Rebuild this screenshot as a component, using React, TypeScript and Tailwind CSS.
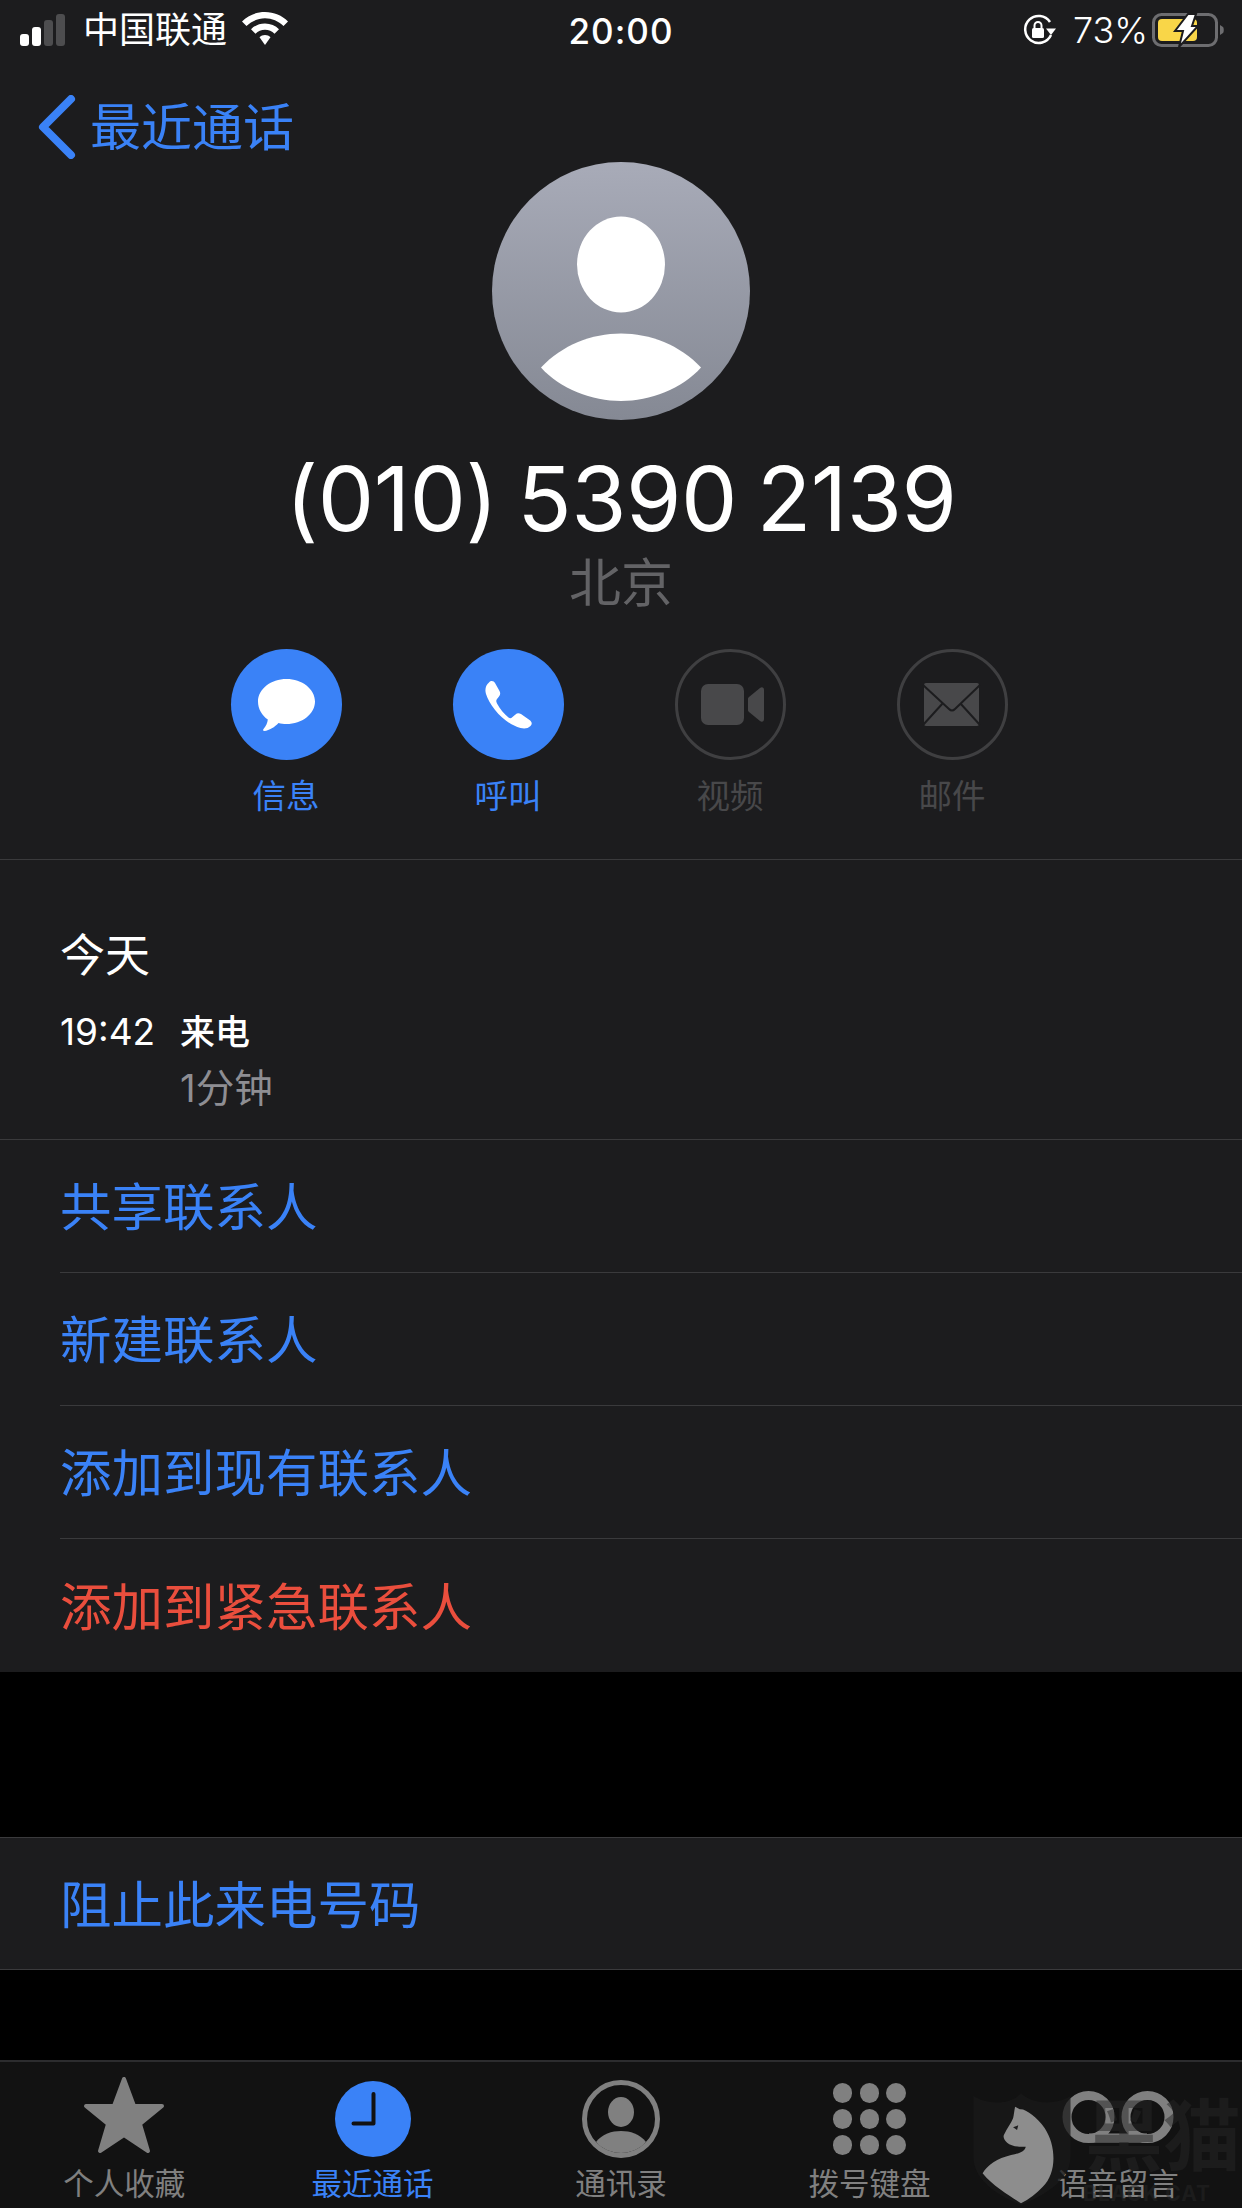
import type { ReactNode } from "react";

const actions = [
  { label: "信息", on: true, icon: <MessageIcon /> },
  { label: "呼叫", on: true, icon: <PhoneIcon /> },
  { label: "视频", on: false, icon: <VideoIcon /> },
  { label: "邮件", on: false, icon: <MailIcon /> },
];

function MessageIcon() {
  return (
    <svg viewBox="0 0 111 111" className="w-full h-full">
      <path fill="#fff" d="M55.500 30C71 30 84 40 84 52.500C84 65 71 75 55.500 75C52.500 75 50 74.700 47.500 74C44 78 38 81.500 33.500 82C32 82 31.700 81 32.500 80C35 77 36.500 74 36.800 70.500C31 66.500 27 60 27 52.500C27 40 40 30 55.500 30Z" />
    </svg>
  );
}

function PhoneIcon() {
  return (
    <svg viewBox="0 0 111 111" className="w-full h-full">
      <path fill="#fff" d="M36 33.500C38 31 41 32 42 34L46.500 42C47.500 44 47.500 45.500 46 47.500L44 50C43 51.500 43 52.500 44 54.500C47 60 51 65 55.500 68.500C57 69.500 58 69.500 59.500 68L62.500 65.500C64 64 66 64 68 65L76.500 71C79 73 79.500 75 77.500 77C75 79.500 71.500 80 67.500 79C52 75 37 58 33 45C31.500 40 33 36 36 33.500Z" />
    </svg>
  );
}

function VideoIcon() {
  return (
    <svg viewBox="0 0 105 105" className="w-full h-full">
      <rect x="23" y="32" width="43" height="41" rx="7" fill="#48484a" />
      <path fill="#48484a" d="M70 47C70 46 70.500 45.500 71 45L82 36C84 34.500 86 35.500 86 38V67C86 69.500 84 70.500 82 69L71 60C70.500 59.500 70 59 70 58Z" />
    </svg>
  );
}

function MailIcon() {
  return (
    <svg viewBox="0 0 105 105" className="w-full h-full">
      <rect x="24" y="31" width="55" height="43" rx="2" fill="#48484a" />
      <path fill="none" stroke="#1c1c1e" strokeWidth="2" d="M23 33L49 57C51 59 53 59 55 57L80 33M23 73L43 51M80 73L60 51" />
    </svg>
  );
}

function StatusBar() {
  return (
    <div className="h-[60px] flex items-center justify-between relative text-white pl-[20px] pr-[16px]">
      <div className="flex items-center">
        <div className="flex items-end gap-[3px] h-[32px] mt-[-1px]">
          <span className="w-[9px] h-[12px] rounded-[3px] bg-white" />
          <span className="w-[9px] h-[19px] rounded-[3px] bg-white" />
          <span className="w-[9px] h-[26px] rounded-[3px] bg-[#4d4d4f]" />
          <span className="w-[9px] h-[32px] rounded-[3px] bg-[#4d4d4f]" />
        </div>
        <span className="ml-[18px] text-[36px] leading-none">中国联通</span>
        <svg viewBox="0 0 46 33" className="w-[46px] h-[33px] ml-[15px] mt-[-3px]">
          <path fill="#fff" d="M23 0C32 0 40 3.500 46 9.500L41.500 14C36.500 9.200 30 6.300 23 6.300C16 6.300 9.500 9.200 4.500 14L0 9.500C6 3.500 14 0 23 0Z" />
          <path fill="#fff" d="M23 11.500C28.500 11.500 33.500 13.700 37 17.200L32.500 21.700C30 19.300 26.700 17.800 23 17.800C19.300 17.800 16 19.300 13.500 21.700L9 17.200C12.500 13.700 17.500 11.500 23 11.500Z" />
          <path fill="#fff" d="M23 23C25.200 23 27 23.800 28.500 25.200L23 33L17.500 25.200C19 23.800 20.800 23 23 23Z" />
        </svg>
      </div>
      <span className="absolute left-0 right-0 mt-[2px] text-center text-[35px] font-medium leading-none tracking-[1px]">20:00</span>
      <div className="flex items-center">
        <svg viewBox="0 0 34 32" className="w-[34px] h-[32px]">
          <path fill="none" stroke="#fff" strokeWidth="2.500" d="M29 21A13.500 13.500 0 1 1 28 8" />
          <path fill="#fff" d="M24 14.500H34L29 21Z" />
          <rect x="10" y="14" width="12" height="10" rx="1.500" fill="#fff" />
          <path fill="none" stroke="#fff" strokeWidth="2" d="M12.500 14V11.500A3.500 3.500 0 0 1 19.500 11.500V14" />
        </svg>
        <span className="ml-[17px] mr-[-1px] text-[36px] leading-none font-light">73%</span>
        <svg viewBox="0 0 74 34" className="w-[74px] h-[34px] ml-[5px]">
          <rect x="1.500" y="1.500" width="63" height="31" rx="8" fill="none" stroke="#6d6d70" strokeWidth="3" />
          <rect x="6" y="6" width="39" height="22" rx="4" fill="#f9d648" />
          <path fill="#6d6d70" d="M68 12L71 14C72 15 72 19 71 20L68 22Z" />
          <path fill="#fff" stroke="#1c1c1e" strokeWidth="2" d="M36 1H44L40 13H46L27 34L31 18H23Z" />
        </svg>
      </div>
    </div>
  );
}

function Avatar() {
  return (
    <div className="w-[258px] h-[258px] rounded-full bg-gradient-to-b from-[#a8abb8] to-[#858994] overflow-hidden">
      <svg viewBox="0 0 258 258" className="w-full h-full">
        <ellipse cx="129" cy="102.500" rx="44" ry="48" fill="#fff" />
        <path fill="#fff" d="M49 205.500C70 183 100 171.500 129 171.500C158 171.500 188 183 209 205.500C190 227 158 239 129 239C100 239 68 227 49 205.500Z" />
      </svg>
    </div>
  );
}

function Row({ children, inset = true, red = false, h = "h-[133px]" }: { children: ReactNode; inset?: boolean; red?: boolean; h?: string }) {
  return (
    <div className="pl-[60px] bg-[#1c1c1e]">
      <div
        className={`${h} flex items-center pt-[4px] text-[51.500px] leading-none ${red ? "text-[#ea4e3d]" : "text-[#3a82f7]"} ${
          inset ? "border-b border-[#3a3a3c]" : ""
        }`}
      >
        {children}
      </div>
    </div>
  );
}

function TabBar() {
  return (
    <div className="h-[148px] bg-[#121212] border-t-[2px] border-[#2c2c2e] grid grid-cols-5 text-[#808080]">
      <Tab label="个人收藏">
        <svg viewBox="0 0 82 78" className="w-[82px] h-[78px] mt-[-8px]">
          <path fill="#808080" stroke="#808080" strokeWidth="4" strokeLinejoin="round" d="M41 3L51 30H79L57 48L65 75L41 59L17 75L25 48L3 30H31Z" />
        </svg>
      </Tab>
      <Tab label="最近通话" active>
        <svg viewBox="0 0 76 76" className="w-[76px] h-[76px]">
          <circle cx="38" cy="38" r="38" fill="#3a82f7" />
          <path fill="none" stroke="#121212" strokeWidth="4" strokeLinecap="round" strokeLinejoin="round" d="M38.500 13V42.500H18.500" />
        </svg>
      </Tab>
      <Tab label="通讯录">
        <svg viewBox="0 0 78 78" className="w-[78px] h-[78px]">
          <circle cx="39" cy="39" r="36.500" fill="none" stroke="#808080" strokeWidth="5" />
          <ellipse cx="39" cy="32" rx="13" ry="15" fill="#808080" />
          <path fill="#808080" d="M14 62C20 54 30 51 39 51C48 51 58 54 64 62C58 69 48 73 39 73C30 73 20 69 14 62Z" />
        </svg>
      </Tab>
      <Tab label="拨号键盘">
        <div className="grid grid-cols-3 gap-x-[7px] gap-y-[6px] w-[73px]">
          {Array.from({ length: 9 }).map((_, i) => (
            <span key={i} className="w-[19.500px] h-[20px] rounded-full bg-[#808080]" />
          ))}
        </div>
      </Tab>
      <Tab label="语音留言">
        <svg viewBox="0 0 112 52" className="w-[112px] h-[52px] mt-[-4px]">
          <path fill="none" stroke="#808080" strokeWidth="9" d="M27 47H85" />
          <circle cx="26.500" cy="26" r="21.500" fill="none" stroke="#808080" strokeWidth="9" />
          <circle cx="85.500" cy="26" r="21.500" fill="none" stroke="#808080" strokeWidth="9" />
        </svg>
      </Tab>
    </div>
  );
}

function Tab({ label, active = false, children }: { label: string; active?: boolean; children: ReactNode }) {
  return (
    <div className={`flex flex-col items-center ${active ? "text-[#3a82f7]" : ""}`}>
      <div className="h-[96px] w-full flex items-center justify-center pt-[18px]">{children}</div>
      <span className="text-[30.500px] leading-none mt-[11px]">{label}</span>
    </div>
  );
}

// watermark lies over the tab bar, same coords as the reference crop
function Watermark() {
  return (
    <div className="absolute left-[621px] top-[2040px] w-[621px] h-[168px] overflow-hidden pointer-events-none">
      <svg viewBox="0 0 1568 504" preserveAspectRatio="none" className="absolute inset-0 w-full h-full">
        <path fill="#1a1a1a" fillOpacity="0.75" d="M890 168C925 195 985 195 1010 160C1040 195 1100 195 1135 168V350C1135 420 1070 465 1010 495C950 465 890 420 890 350Z" />
        <path fill="#8d8d8d" d="M995 200L1007 208C1020 205 1050 230 1070 265C1100 320 1100 400 1065 440C1050 460 1030 478 1010 490C985 470 940 440 913 400C925 375 950 355 985 345C1005 340 1020 335 1022 320C1005 322 985 318 975 308C968 300 963 290 968 282C975 265 985 250 990 235C992 225 993 212 995 200Z" />
        <path fill="#1c1c1e" d="M990 262L1003 256L1000 270Z" />
      </svg>
      <span className="absolute left-[464px] top-[58px] text-[78px] leading-none font-bold text-[#262626]/50 whitespace-nowrap">黑猫</span>
      <span className="absolute left-[462px] top-[143px] text-[21px] leading-none font-bold text-[#262626]/50 whitespace-nowrap tracking-[1px]">BLACK CAT</span>
    </div>
  );
}

export default function App() {
  return (
    <div className="relative w-[1242px] h-[2208px] bg-black overflow-hidden font-['Inter','Noto_Sans_CJK_SC',sans-serif]">
      <div className="bg-[#1c1c1e]">
        <StatusBar />

        {/* back link */}
        <div className="h-[102px] flex items-center pt-[32px] pl-[38px] text-[#3a82f7]">
          <svg viewBox="0 0 38 64" className="w-[38px] h-[64px]">
            <path fill="none" stroke="#3a82f7" strokeWidth="8" strokeLinecap="round" strokeLinejoin="round" d="M33 4L5 32L33 60" />
          </svg>
          <span className="ml-[14px] text-[51px] leading-none">最近通话</span>
        </div>

        {/* header */}
        <div className="h-[698px] border-b border-[#3a3a3c] flex flex-col items-center">
          <Avatar />
          <div className="mt-[29px] text-[89.500px] leading-[100px] text-white tracking-[-0.500px] [word-spacing:-5px]">(010) 5390 2139</div>
          <div className="mt-[5px] text-[52px] leading-[60px] text-[#636366]">北京</div>
          <div className="mt-[35px] pr-[4px] flex gap-[111px]">
            {actions.map((a) => (
              <div key={a.label} className="flex flex-col items-center w-[111px]">
                <div
                  className={`w-[111px] h-[111px] rounded-full ${a.on ? "bg-[#3a82f7]" : "border-[3px] border-[#3f3f41]"}`}
                >
                  {a.icon}
                </div>
                <span className={`mt-[20px] text-[33.500px] leading-none ${a.on ? "text-[#3a82f7]" : "text-[#48484a]"}`}>
                  {a.label}
                </span>
              </div>
            ))}
          </div>
        </div>

        {/* call log */}
        <div className="h-[279px] pl-[60px]">
          <div className="pt-[73px] text-[45px] leading-none text-white">今天</div>
          <div className="mt-[31px] flex">
            <span className="w-[120px] text-[37px] leading-[46px] text-white">19:42</span>
            <div>
              <div className="text-[35px] leading-[46px] text-white font-medium">来电</div>
              <div className="mt-[10px] text-[38.500px] leading-[46px] text-[#8e8e93]">1分钟</div>
            </div>
          </div>
        </div>

        <div className="border-t border-[#3a3a3c]">
          <Row>共享联系人</Row>
          <Row>新建联系人</Row>
          <Row>添加到现有联系人</Row>
          <Row inset={false} red>
            添加到紧急联系人
          </Row>
        </div>
      </div>

      <div className="mt-[165px] border-y border-[#3a3a3c]">
        <Row inset={false} h="h-[131px]">阻止此来电号码</Row>
      </div>

      <div className="absolute inset-x-0 bottom-0">
        <TabBar />
      </div>
      <Watermark />
    </div>
  );
}
